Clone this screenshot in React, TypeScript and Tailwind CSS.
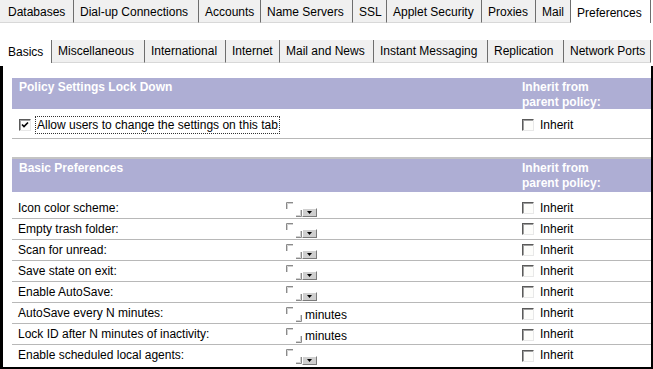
import React from "react";

const topTabs: [string, number][] = [
  ["Databases", 74],
  ["Dial-up Connections", 125],
  ["Accounts", 62],
  ["Name Servers", 92],
  ["SSL", 34],
  ["Applet Security", 95],
  ["Proxies", 54],
  ["Mail", 35],
  ["Preferences", 80],
];

const subTabs: [string, number][] = [
  ["Basics", 52],
  ["Miscellaneous", 93],
  ["International", 81],
  ["Internet", 54],
  ["Mail and News", 94],
  ["Instant Messaging", 114],
  ["Replication", 76],
  ["Network Ports", 87],
];

const prefs: { label: string; kind: "select" | "minutes" }[] = [
  { label: "Icon color scheme:", kind: "select" },
  { label: "Empty trash folder:", kind: "select" },
  { label: "Scan for unread:", kind: "select" },
  { label: "Save state on exit:", kind: "select" },
  { label: "Enable AutoSave:", kind: "select" },
  { label: "AutoSave every N minutes:", kind: "minutes" },
  { label: "Lock ID after N minutes of inactivity:", kind: "minutes" },
  { label: "Enable scheduled local agents:", kind: "select" },
];

function TabRow({ tabs, selected, top }: { tabs: [string, number][]; selected: string; top?: boolean }) {
  return (
    <div className="flex h-[23px]">
      {tabs.map(([name, w], i) => (
        <div
          key={name}
          style={{ width: w }}
          className={`flex items-center border-r border-[#6e6e6e] whitespace-nowrap ${top ? "pt-[3px]" : "pt-[1px]"} ${
            i === 0 ? "pl-[8px]" : "pl-[6px]"
          } ${name === selected ? "bg-white" : "bg-[#f0f0f0] border-b border-b-[#d8d8d8]"}`}
        >
          {name}
        </div>
      ))}
    </div>
  );
}

function Checkbox({ checked = false }: { checked?: boolean }) {
  return (
    <span className="inline-flex w-[12px] h-[12px] shrink-0 items-center justify-center bg-[#fdfdfb] border border-t-[#5a5a5a] border-l-[#5a5a5a] border-b-[#e8e8e8] border-r-[#e8e8e8] shadow-[inset_1px_1px_0_#a0a0a0]">
      {checked && (
        <svg width="8" height="8" viewBox="0 0 8 8">
          <path d="M1 3.5 L3 5.5 L7 1.5" stroke="#000" strokeWidth="1.6" fill="none" />
        </svg>
      )}
    </span>
  );
}

function Inherit() {
  return (
    <div className="flex items-center gap-[6px]">
      <Checkbox />
      <span>Inherit</span>
    </div>
  );
}

// the little corner marks that frame an empty field
function Marks() {
  return (
    <div className="flex flex-col justify-between w-[17px] h-[15px] shrink-0">
      <svg width="7" height="7" viewBox="0 0 7 7" className="ml-[1px]">
        <path d="M0.5 7 V0.5 H7" stroke="#8a8a8a" fill="none" />
        <path d="M1.5 7 V1.5 H7" stroke="#d0d0d0" fill="none" />
      </svg>
      <svg width="6" height="7" viewBox="0 0 6 7" className="self-end">
        <path d="M5.5 0 V6.5 H0" stroke="#8a8a8a" fill="none" />
        <path d="M4.5 0 V5.5 H0" stroke="#d0d0d0" fill="none" />
      </svg>
    </div>
  );
}

function DropButton() {
  return (
    <span className="self-end shrink-0 inline-flex items-center justify-center w-[15px] h-[9px] bg-[#cfcfcf] border border-t-white border-l-white border-b-[#7a7a7a] border-r-[#7a7a7a]">
      <svg width="5" height="3" viewBox="0 0 5 3">
        <path d="M0 0 H5 L2.5 3 Z" fill="#000" />
      </svg>
    </span>
  );
}

export default function App() {
  return (
    <div
      className="w-[653px] h-[369px] bg-white text-black text-[12px] leading-[15px] overflow-hidden"
      style={{ fontFamily: '"Liberation Sans", Arial, sans-serif' }}
    >
      <TabRow tabs={topTabs} selected="Preferences" top />
      <div className="h-[17px]" />
      <TabRow tabs={subTabs} selected="Basics" />
      <div className="h-[3px]" />

      <div className="h-[303px] border-l-[3px] border-r-2 border-b-2 border-black pt-[12px] pl-[9px]">
        {/* Policy lock down */}
        <div className="grid grid-cols-[273px_237px_1fr] h-[31px] bg-[#aeaed4] text-white font-bold pt-[2px]">
          <div className="pl-[7px]">Policy Settings Lock Down</div>
          <div />
          <div>
            Inherit from
            <br />
            parent policy:
          </div>
        </div>
        <div className="grid grid-cols-[273px_237px_1fr] h-[30px] border-b border-[#b8b8b8] items-center pt-[3px]">
          <div className="flex items-center pl-[7px] gap-[4px] whitespace-nowrap">
            <Checkbox checked />
            <span className="border border-dotted border-[#333] px-[1px] leading-[16px]">
              Allow users to change the settings on this tab
            </span>
          </div>
          <div />
          <Inherit />
        </div>

        <div className="h-[18px]" />

        {/* Basic preferences */}
        <div className="border-t-2 border-[#c4c4c4]">
          <div className="grid grid-cols-[273px_237px_1fr] h-[33px] bg-[#aeaed4] text-white font-bold pt-[2px]">
            <div className="pl-[7px]">Basic Preferences</div>
            <div />
            <div>
              Inherit from
              <br />
              parent policy:
            </div>
          </div>
        </div>
        <div className="h-[6px]" />
        {prefs.map((p, i) => (
          <div
            key={p.label}
            className={`grid grid-cols-[273px_237px_1fr] h-[21px] items-center ${
              i < prefs.length - 1 ? "border-b border-[#b8b8b8]" : ""
            }`}
          >
            <div className="pl-[6px] whitespace-nowrap">{p.label}</div>
            <div className="flex self-stretch pt-[4px] pb-[1px] items-stretch">
              <Marks />
              {p.kind === "select" ? (
                <DropButton />
              ) : (
                <span className="self-center ml-[3px] mt-[1px]">minutes</span>
              )}
            </div>
            <Inherit />
          </div>
        ))}
      </div>
    </div>
  );
}
